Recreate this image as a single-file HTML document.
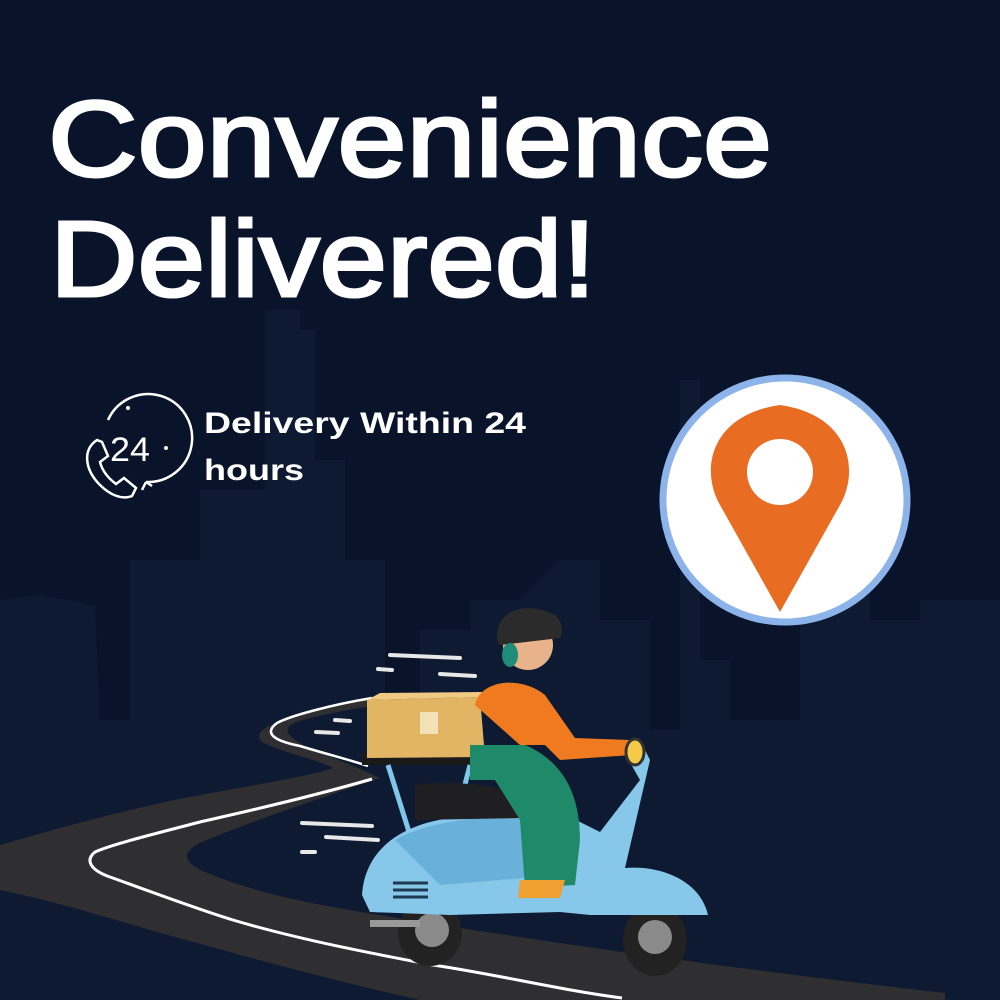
<!DOCTYPE html>
<html><head><meta charset="utf-8"><style>
html,body{margin:0;padding:0;background:#0a1429;}
svg{display:block}
</style></head><body>
<svg width="1000" height="1000" viewBox="0 0 1000 1000" xmlns="http://www.w3.org/2000/svg">
<rect width="1000" height="1000" fill="#09142a"/>
<!-- skyline -->
<g fill="#0d1a31">
<path d="M0 600 L40 595 L95 605 L100 720 L130 720 L130 560 L200 560 L200 490 L265 490 L265 310 L300 310 L300 330 L315 330 L315 460 L345 460 L345 560 L385 560 L385 700 L420 700 L420 630 L470 630 L470 600 L520 600 L560 560 L600 560 L600 620 L650 620 L650 730 L680 730 L680 380 L700 380 L700 660 L730 660 L730 720 L800 720 L800 520 L870 520 L870 620 L920 620 L920 600 L1000 600 L1000 1000 L0 1000 Z"/>
</g>
<!-- road -->
<path d="M0 845 C60 828 130 808 200 795 C260 784 310 776 333 768 C320 760 280 752 262 742 C255 735 262 728 275 723 C300 713 340 704 370 698 L372 706 C340 711 305 718 292 724 C282 730 290 738 305 746 C330 757 360 768 380 778 C330 795 240 825 200 843 C182 852 182 862 205 872 C260 895 320 905 367 913 C500 935 700 965 945 993 L945 1000 L420 1000 C330 980 240 955 150 930 C90 912 40 898 0 890 Z" fill="#2f2f31"/>
<path d="M372 698 C330 705 290 716 277 723 C265 732 270 740 300 746 C330 755 350 760 368 766" stroke="#fff" stroke-width="2.5" fill="none"/>
<path d="M372 779 C300 800 230 815 200 822 C150 835 110 845 95 852 C85 860 90 870 110 877 C160 895 200 910 233 920 C300 940 380 955 433 965 C500 975 560 990 622 998" stroke="#fff" stroke-width="3" fill="none"/>
<!-- speed lines -->
<g stroke="#e8e8e8" stroke-width="4" stroke-linecap="round">
<line x1="390" y1="655" x2="460" y2="658"/><line x1="378" y1="669" x2="392" y2="670"/><line x1="440" y1="674" x2="475" y2="676"/>
<line x1="335" y1="720" x2="350" y2="721"/><line x1="316" y1="732" x2="338" y2="733"/>
<line x1="302" y1="823" x2="372" y2="826"/><line x1="326" y1="837" x2="378" y2="840"/><line x1="302" y1="852" x2="315" y2="852"/>
</g>
<!-- scooter -->
<rect x="362" y="753" width="126" height="12" fill="#1a1a1a"/>
<path d="M388 765 L410 835 M470 765 L452 835" stroke="#7fc6e8" stroke-width="5"/>
<ellipse cx="430" cy="933" rx="32" ry="33" fill="#222"/><circle cx="432" cy="930" r="17" fill="#8a8a8a"/>
<ellipse cx="655" cy="940" rx="32" ry="36" fill="#222"/><circle cx="655" cy="937" r="17" fill="#8a8a8a"/>
<rect x="370" y="920" width="50" height="7" fill="#999"/>
<path d="M362 895 C365 850 400 825 450 818 L560 812 L600 832 L640 780 L620 745 L640 740 L650 760 L625 868 C660 865 700 880 708 915 L590 915 L560 912 L450 915 L370 912 Z" fill="#86c7ea"/>
<path d="M395 840 C420 825 470 815 520 818 L560 875 L440 885 Z" fill="#6ab1da"/>
<g stroke="#1d3a50" stroke-width="3"><line x1="393" y1="883" x2="428" y2="883"/><line x1="393" y1="890" x2="428" y2="890"/><line x1="393" y1="897" x2="428" y2="897"/></g>
<path d="M415 785 C450 780 500 785 520 795 L520 818 L415 820 Z" fill="#1f1f22"/>
<!-- box -->
<path d="M367 700 L480 697 L485 757 L367 758 Z" fill="#e2b565"/><path d="M367 700 L380 693 L482 692 L480 697 Z" fill="#f0ca83"/>
<rect x="420" y="712" width="18" height="22" fill="#f3e2b8"/>
<!-- rider -->
<path d="M475 705 C480 680 520 675 545 695 L575 738 L630 740 L632 755 L560 760 L545 745 L520 745 Z" fill="#f07a20"/>
<path d="M470 745 L525 745 C560 760 580 790 580 840 L575 885 L525 888 L520 820 L495 780 L470 780 Z" fill="#1f8a6a"/>
<path d="M520 880 L565 880 L560 898 L518 898 Z" fill="#f0a030"/>
<ellipse cx="528" cy="645" rx="25" ry="25" fill="#e8b38a"/>
<path d="M497 640 C495 610 525 600 555 615 C565 625 562 633 560 638 L500 645 Z" fill="#2b2b2b"/>
<ellipse cx="510" cy="655" rx="8" ry="12" fill="#1e8c78"/>
<ellipse cx="635" cy="752" rx="9" ry="13" fill="#f5c94a" stroke="#333" stroke-width="3"/>
<!-- title -->
<g font-family="Liberation Sans, sans-serif" fill="#fff">
<text x="48" y="176" font-size="108" textLength="724" lengthAdjust="spacingAndGlyphs" stroke="#fff" stroke-width="3">Convenience</text>
<text x="50" y="296" font-size="108" textLength="546" lengthAdjust="spacingAndGlyphs" stroke="#fff" stroke-width="3">Delivered!</text>
<text x="204" y="433" font-size="30" font-weight="bold" textLength="322" lengthAdjust="spacingAndGlyphs">Delivery Within 24</text>
<text x="204" y="480" font-size="30" font-weight="bold" textLength="100" lengthAdjust="spacingAndGlyphs">hours</text>
</g>
<!-- 24 icon -->
<g stroke="#fff" stroke-width="2.5" fill="none">
<path d="M108 420 A44 44 0 1 1 146 482"/>
<path d="M97 440 C82 450 85 470 100 485 C110 495 122 500 132 496 L136 488 L124 478 L116 484 C108 478 102 470 100 462 L108 456 L102 442 Z"/>
<path d="M146 482 L142 490 M146 482 L152 486"/>
</g>
<circle cx="128" cy="408" r="2" fill="#fff"/><circle cx="166" cy="448" r="2" fill="#fff"/>
<text x="110" y="461" font-family="Liberation Sans, sans-serif" font-size="34" fill="#fff" textLength="40" lengthAdjust="spacingAndGlyphs">24</text>
<!-- pin -->
<circle cx="785" cy="500" r="122" fill="#fff" stroke="#8db4ea" stroke-width="7"/>
<path d="M780 612 L720 505 C700 470 710 415 780 405 C850 415 860 470 840 505 Z" fill="#e86c22"/>
<circle cx="780" cy="472" r="33" fill="#fff"/>
</svg>
</body></html>
